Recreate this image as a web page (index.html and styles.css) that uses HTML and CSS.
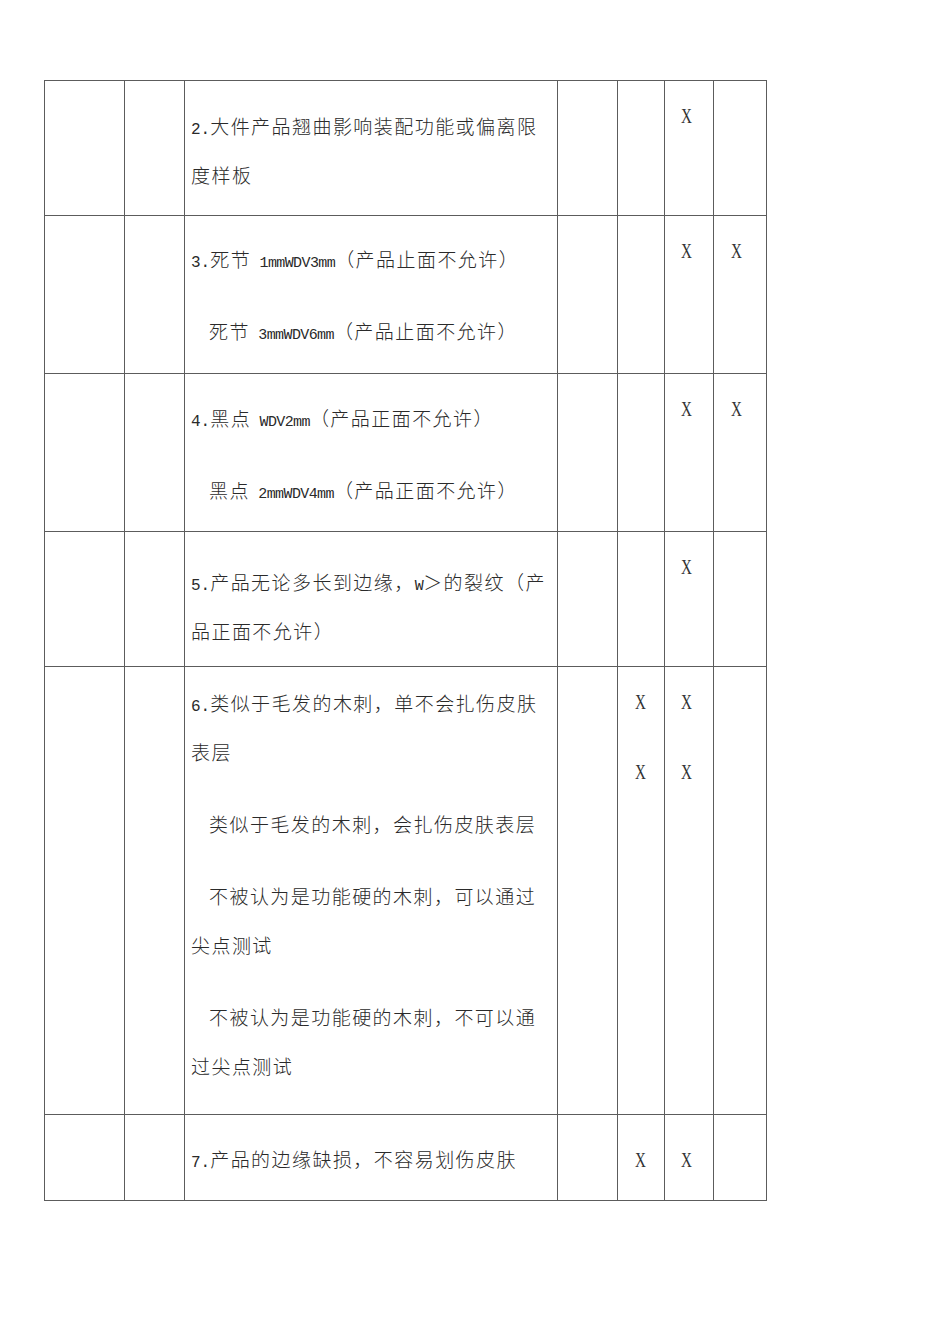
FILE: index.html
```html
<!DOCTYPE html>
<html lang="zh">
<head>
<meta charset="utf-8">
<link rel="stylesheet" href="styles.css">
</head>
<body>
<div class="page">
<table class="grid">
  <colgroup>
    <col class="c1"><col class="c2"><col class="c3"><col class="c4"><col class="c5"><col class="c6"><col class="c7">
  </colgroup>
  <tr class="r1">
    <td></td><td></td>
    <td class="txt"><p><span class="num">2.</span>大件产品翘曲影响装配功能或偏离限<br>度样板</p></td>
    <td></td><td></td>
    <td class="mk"><span class="x">X</span></td>
    <td></td>
  </tr>
  <tr class="r2">
    <td></td><td></td>
    <td class="txt"><p><span class="num">3.</span>死节<span class="lat"> 1mmWDV3mm</span>（产品止面不允许）</p><p class="ind">死节<span class="lat"> 3mmWDV6mm</span>（产品止面不允许）</p></td>
    <td></td><td></td>
    <td class="mk"><span class="x">X</span></td>
    <td class="mk"><span class="x">X</span></td>
  </tr>
  <tr class="r3">
    <td></td><td></td>
    <td class="txt"><p><span class="num">4.</span>黑点<span class="lat"> WDV2mm</span>（产品正面不允许）</p><p class="ind">黑点<span class="lat"> 2mmWDV4mm</span>（产品正面不允许）</p></td>
    <td></td><td></td>
    <td class="mk"><span class="x">X</span></td>
    <td class="mk"><span class="x">X</span></td>
  </tr>
  <tr class="r4">
    <td></td><td></td>
    <td class="txt"><p><span class="num">5.</span>产品无论多长到边缘，<span class="lat">W</span>＞的裂纹（产<br>品正面不允许）</p></td>
    <td></td><td></td>
    <td class="mk"><span class="x">X</span></td>
    <td></td>
  </tr>
  <tr class="r5">
    <td></td><td></td>
    <td class="txt"><p><span class="num">6.</span>类似于毛发的木刺，单不会扎伤皮肤<br>表层</p><p class="ind">类似于毛发的木刺，会扎伤皮肤表层</p><p class="ind">不被认为是功能硬的木刺，可以通过<br><span class="flush">尖点测试</span></p><p class="ind">不被认为是功能硬的木刺，不可以通<br><span class="flush">过尖点测试</span></p></td>
    <td></td>
    <td class="mk"><span class="x">X</span><span class="x">X</span></td>
    <td class="mk"><span class="x">X</span><span class="x">X</span></td>
    <td></td>
  </tr>
  <tr class="r6">
    <td></td><td></td>
    <td class="txt"><p><span class="num">7.</span>产品的边缘缺损，不容易划伤皮肤</p></td>
    <td></td>
    <td class="mk"><span class="x">X</span></td>
    <td class="mk"><span class="x">X</span></td>
    <td></td>
  </tr>
</table>
</div>
</body>
</html>
```

FILE: styles.css
```css
html, body {
  margin: 0;
  padding: 0;
  background: #ffffff;
}

.page {
  padding: 80px 0 0 44px;
}

.grid {
  border-collapse: collapse;
  table-layout: fixed;
  width: 723px;
  font-family: "Liberation Mono", "Noto Sans CJK SC", monospace;
  font-size: 19px;
  font-weight: 300;
  color: #2a2a2a;
}

.c1 { width: 80px; }
.c2 { width: 60px; }
.c3 { width: 373px; }
.c4 { width: 60px; }
.c5 { width: 47px; }
.c6 { width: 49px; }
.c7 { width: 53px; }

.grid td {
  border: 1px solid #5c5c5c;
  padding: 0;
  vertical-align: top;
}

.txt {
  padding-left: 6px !important;
  padding-right: 0 !important;
}

.txt p {
  margin: 0 0 23px 0;
  line-height: 49px;
  letter-spacing: 1.45px;
  white-space: nowrap;
}

.txt p:last-child {
  margin-bottom: 0;
}

.txt p.ind {
  padding-left: 18px;
}

.txt p.ind .flush {
  margin-left: -18px;
}

.num {
  font-family: "Liberation Mono", monospace;
  font-size: 16px;
  font-weight: 400;
  letter-spacing: 0;
  line-height: 1;
}

.lat {
  font-family: "Liberation Mono", monospace;
  font-size: 15px;
  font-weight: 400;
  letter-spacing: -0.6px;
  line-height: 1;
}

.mk {
  text-align: center;
  padding-top: 25px !important;
  padding-right: 1px !important;
}

.grid td.mk:nth-child(6) {
  padding-right: 5px !important;
}

.grid td.mk:nth-child(7) {
  padding-right: 7px !important;
}

.x {
  display: block;
  height: 20px;
  line-height: 20px;
  font-family: "Liberation Serif", serif;
  font-size: 21px;
  font-weight: 400;
  color: #333;
  transform: scaleX(0.72);
  margin-bottom: 50px;
}

.x:last-child {
  margin-bottom: 0;
}

.r1 .txt { padding-top: 24px !important; padding-bottom: 12px !important; }
.r2 .txt { padding-top: 22px !important; padding-bottom: 14px !important; }
.r3 .txt { padding-top: 23px !important; padding-bottom: 13px !important; }
.r4 .txt { padding-top: 29px !important; padding-bottom: 7px !important; }
.r5 .txt { padding-top: 15px !important; padding-bottom: 20px !important; }
.r6 .txt { padding-top: 23px !important; padding-bottom: 13px !important; }
.r6 .mk { padding-top: 35px !important; }
```
